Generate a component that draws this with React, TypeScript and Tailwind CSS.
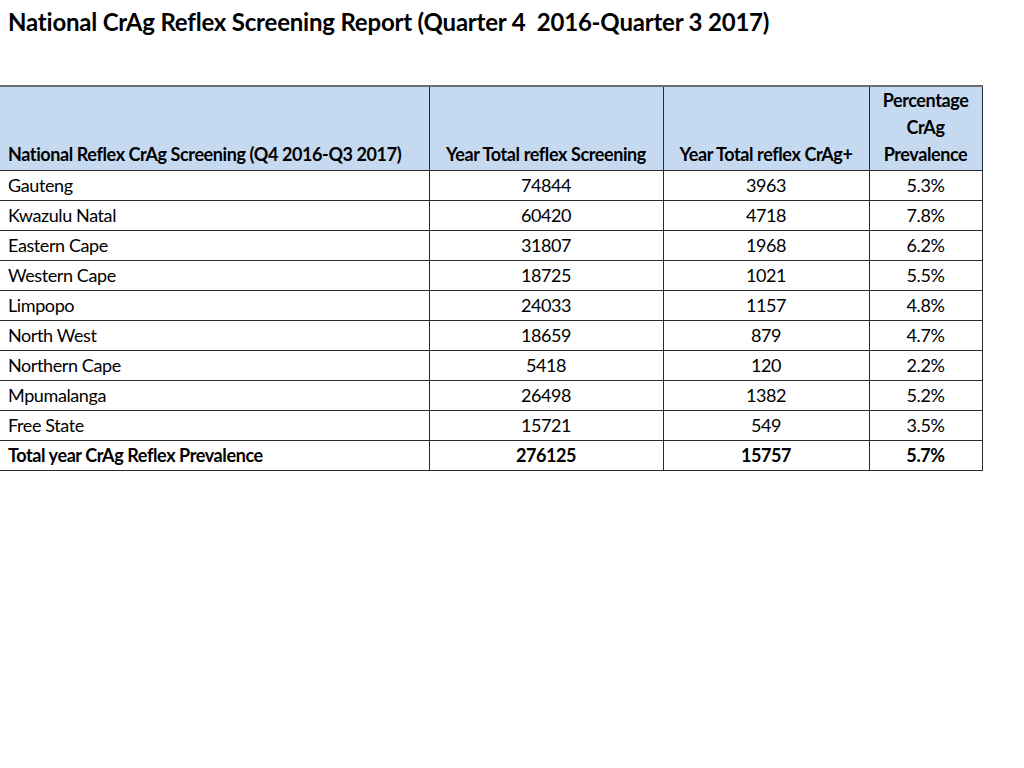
const rows = [
  { name: 'Gauteng', screened: '74844', positive: '3963', pct: '5.3%' },
  { name: 'Kwazulu Natal', screened: '60420', positive: '4718', pct: '7.8%' },
  { name: 'Eastern Cape', screened: '31807', positive: '1968', pct: '6.2%' },
  { name: 'Western Cape', screened: '18725', positive: '1021', pct: '5.5%' },
  { name: 'Limpopo', screened: '24033', positive: '1157', pct: '4.8%' },
  { name: 'North West', screened: '18659', positive: '879', pct: '4.7%' },
  { name: 'Northern Cape', screened: '5418', positive: '120', pct: '2.2%' },
  { name: 'Mpumalanga', screened: '26498', positive: '1382', pct: '5.2%' },
  { name: 'Free State', screened: '15721', positive: '549', pct: '3.5%' },
];

const font = { fontFamily: 'Lato, "Open Sans", sans-serif' };

export default function App() {
  return (
    <div className="w-[1024px] h-[768px] bg-white text-black" style={font}>
      <h1 className="pl-2 pt-[8px] text-[24px] font-bold leading-[28px] whitespace-pre tracking-[-0.2px]">
        National CrAg Reflex Screening Report (Quarter 4  2016-Quarter 3 2017)
      </h1>

      <table className="mt-[49px] border-collapse table-fixed w-[982px] text-[18px] tracking-[-0.4px]">
        <colgroup>
          <col className="w-[429px]" />
          <col className="w-[234px]" />
          <col className="w-[206px]" />
          <col className="w-[113px]" />
        </colgroup>
        <thead>
          <tr className="h-[81px] bg-[#c5d9f1] border-t-2 border-t-[#6b6e73] border-b border-b-[#2a2a2a]">
            <th className="align-bottom text-left pl-2 pb-[2px] font-bold leading-[27px]">
              National Reflex CrAg Screening (Q4 2016-Q3 2017)
            </th>
            <th className="align-bottom text-center pb-[2px] font-bold leading-[27px] border-l border-[#1f2a38]">
              Year Total reflex Screening
            </th>
            <th className="align-bottom text-center pb-[2px] font-bold leading-[27px] border-l border-[#1f2a38]">
              Year Total reflex CrAg+
            </th>
            <th className="align-bottom text-center pb-[2px] font-bold leading-[27px] border-l border-r border-[#1f2a38]">
              Percentage
              <br />
              CrAg
              <br />
              Prevalence
            </th>
          </tr>
        </thead>
        <tbody>
          {rows.map((r) => (
            <tr key={r.name} className="h-[30px] border-b border-[#2a2a2a] leading-[29px]">
              <td className="pl-2">{r.name}</td>
              <td className="text-center border-l border-[#2a2a2a]">{r.screened}</td>
              <td className="text-center border-l border-[#2a2a2a]">{r.positive}</td>
              <td className="text-center border-l border-r border-[#2a2a2a]">{r.pct}</td>
            </tr>
          ))}
          <tr className="h-[30px] border-b border-[#2a2a2a] leading-[29px] font-bold">
            <td className="pl-2">Total year CrAg Reflex Prevalence</td>
            <td className="text-center border-l border-[#2a2a2a]">276125</td>
            <td className="text-center border-l border-[#2a2a2a]">15757</td>
            <td className="text-center border-l border-r border-[#2a2a2a]">5.7%</td>
          </tr>
        </tbody>
      </table>
    </div>
  );
}
